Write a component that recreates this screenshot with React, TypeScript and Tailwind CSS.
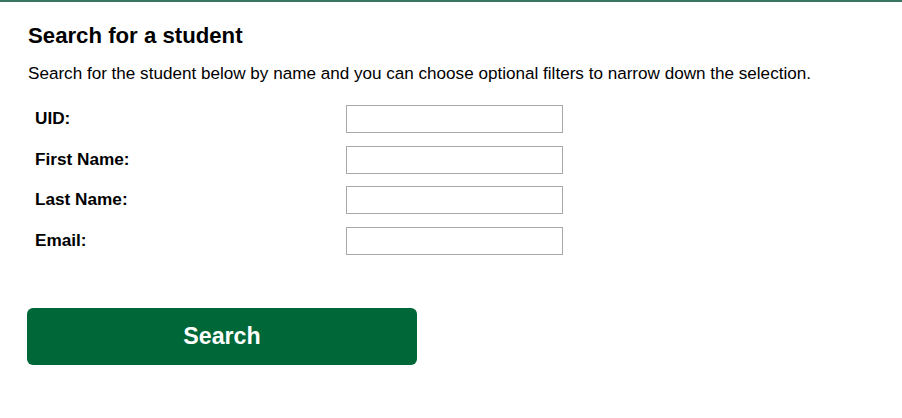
import React from "react";

export default function App() {
  const fields = ["UID:", "First Name:", "Last Name:", "Email:"];
  return (
    <div
      className="w-[902px] h-[418px] bg-white border-t-2 border-[#3b7463] text-black"
      style={{ fontFamily: '"Liberation Sans", Arial, sans-serif' }}
    >
      <div className="pl-[28px] pt-[20px]">
        <h1 className="text-[22.2px] font-bold leading-[28px]">Search for a student</h1>
        <p className="mt-[14px] text-[17.1px] leading-[20px]">
          Search for the student below by name and you can choose optional filters to narrow down the selection.
        </p>
        <div className="mt-[21px] flex flex-col gap-[12.7px] pl-[7px]">
          {fields.map((f) => (
            <div key={f} className="flex items-center">
              <label className="w-[311px] text-[17.2px] font-bold">{f}</label>
              <input
                type="text"
                className="w-[217px] h-[28px] border border-[#a9a9a9] bg-white outline-none"
              />
            </div>
          ))}
        </div>
        <button className="mt-[53px] -ml-[1px] w-[390px] h-[57px] rounded-[6px] bg-[#006838] text-white text-[23.2px] font-bold">
          Search
        </button>
      </div>
    </div>
  );
}
